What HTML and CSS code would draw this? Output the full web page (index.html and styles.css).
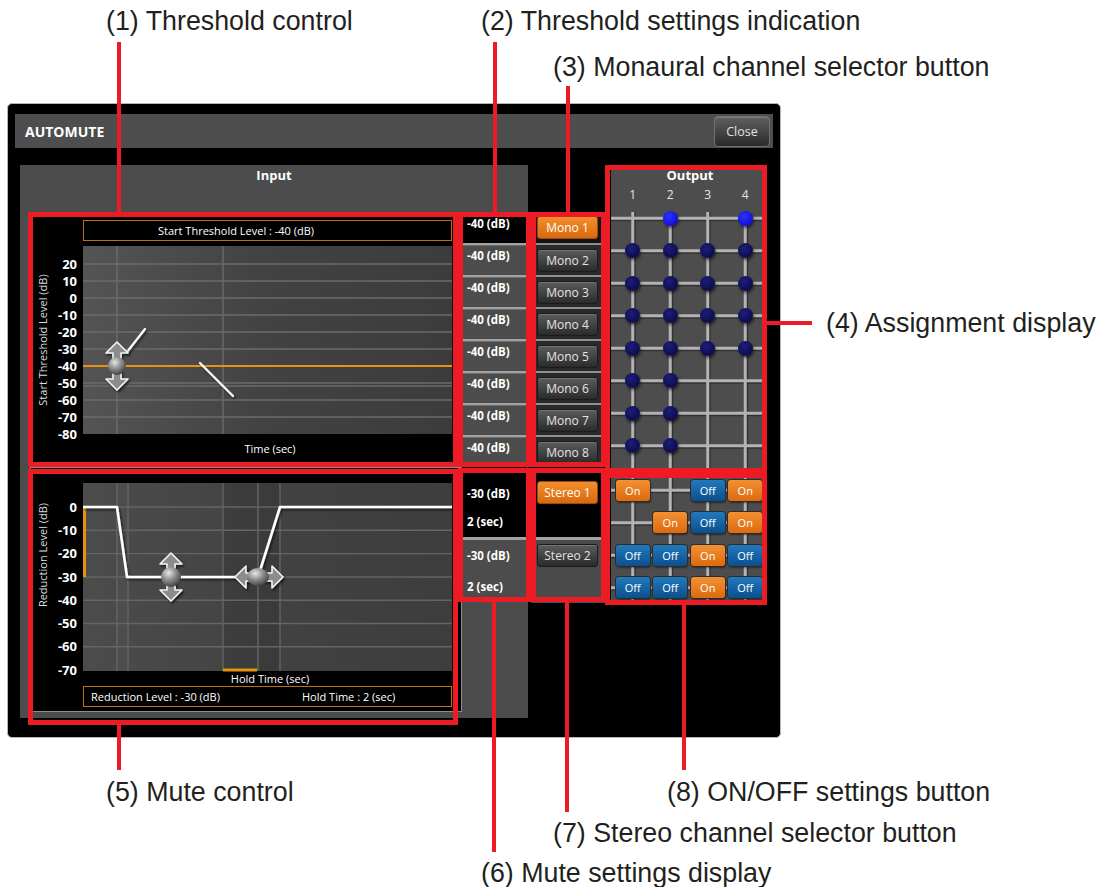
FILE: index.html
```html
<!DOCTYPE html>
<html lang="en">
<head>
<meta charset="utf-8">
<title>AUTOMUTE</title>
<link rel="stylesheet" href="styles.css">
</head>
<body>
<div class="figure">
  <div class="window">
    <div class="titlebar">
      <span class="title">AUTOMUTE</span>
      <div class="close-btn">Close</div>
    </div>
    <div class="content">
      <div class="input-panel">
        <div class="panel-title">Input</div>
        <div class="row-a">
          <div class="thr-block">
            <div class="info-box thr-info">Start Threshold Level : -40 (dB)</div>
            <svg class="chart thr-chart" width="431" height="223" viewBox="0 0 431 223">
              <defs>
                <linearGradient id="tg" x1="0" x2="1" y1="0" y2="0">
                  <stop offset="0" stop-color="#545454"/>
                  <stop offset="0.5" stop-color="#424242"/>
                  <stop offset="1" stop-color="#3c3c3c"/>
                </linearGradient>
                <radialGradient id="kg1" cx="0.38" cy="0.3" r="0.75">
                  <stop offset="0" stop-color="#e8e8e8"/>
                  <stop offset="0.45" stop-color="#929292"/>
                  <stop offset="1" stop-color="#3a3a3a"/>
                </radialGradient>
                <filter id="sh1" x="-30%" y="-30%" width="160%" height="160%">
                  <feDropShadow dx="1.5" dy="2" stdDeviation="1.2" flood-color="#000" flood-opacity="0.6"/>
                </filter>
              </defs>
              <rect x="53" y="2" width="369" height="188" fill="url(#tg)"/>
              <g stroke="#6b6b6b" stroke-width="1.4">
                <line x1="53" y1="20" x2="422" y2="20"/>
                <line x1="53" y1="37" x2="422" y2="37"/>
                <line x1="53" y1="54" x2="422" y2="54"/>
                <line x1="53" y1="71" x2="422" y2="71"/>
                <line x1="53" y1="88" x2="422" y2="88"/>
                <line x1="53" y1="105" x2="422" y2="105"/>
                <line x1="53" y1="139" x2="422" y2="139"/>
                <line x1="53" y1="142" x2="422" y2="142"/>
                <line x1="53" y1="156" x2="422" y2="156"/>
                <line x1="53" y1="173" x2="422" y2="173"/>
                <line x1="87" y1="2" x2="87" y2="190"/>
                <line x1="193" y1="2" x2="193" y2="190"/>
              </g>
              <line x1="53" y1="122" x2="422" y2="122" stroke="#e8920e" stroke-width="2"/>
              <g stroke="#fff" stroke-width="2.2" stroke-linecap="round" filter="url(#sh1)">
                <line x1="97" y1="108" x2="115" y2="85"/>
                <line x1="170" y1="119" x2="203" y2="152"/>
              </g>
              <polygon points="87,98 98,109 91,109 91,135 98,135 87,146 76,135 83,135 83,109 76,109" fill="#8c8c8c" stroke="#f2f2f2" stroke-width="1.6" stroke-linejoin="round" filter="url(#sh1)"/>
              <circle cx="87" cy="122" r="9" fill="url(#kg1)"/>
              <g class="axis" text-anchor="end">
                <text x="47" y="24.5">20</text>
                <text x="47" y="41.5">10</text>
                <text x="47" y="58.5">0</text>
                <text x="47" y="75.5">-10</text>
                <text x="47" y="92.5">-20</text>
                <text x="47" y="109.5">-30</text>
                <text x="47" y="126.5">-40</text>
                <text x="47" y="143.5">-50</text>
                <text x="47" y="160.5">-60</text>
                <text x="47" y="177.5">-70</text>
                <text x="47" y="194.5">-80</text>
              </g>
              <text class="axis-title" transform="translate(17,96) rotate(-90)" text-anchor="middle">Start Threshold Level (dB)</text>
              <text class="axis-x" x="240" y="209" text-anchor="middle">Time (sec)</text>
            </svg>
          </div>
          <div class="thr-settings">
            <div class="set-cell sel">-40 (dB)</div>
            <div class="set-cell">-40 (dB)</div>
            <div class="set-cell">-40 (dB)</div>
            <div class="set-cell">-40 (dB)</div>
            <div class="set-cell">-40 (dB)</div>
            <div class="set-cell">-40 (dB)</div>
            <div class="set-cell">-40 (dB)</div>
            <div class="set-cell">-40 (dB)</div>
          </div>
        </div>
        <div class="row-b">
          <div class="mute-block">
            <svg class="chart mute-chart" width="430" height="217" viewBox="0 0 430 217">
              <defs>
                <linearGradient id="mg" x1="0" x2="1" y1="0" y2="0">
                  <stop offset="0" stop-color="#4c4c4c"/>
                  <stop offset="0.5" stop-color="#424242"/>
                  <stop offset="1" stop-color="#3d3d3d"/>
                </linearGradient>
                <radialGradient id="kg2" cx="0.38" cy="0.3" r="0.75">
                  <stop offset="0" stop-color="#e8e8e8"/>
                  <stop offset="0.45" stop-color="#929292"/>
                  <stop offset="1" stop-color="#3a3a3a"/>
                </radialGradient>
                <filter id="sh2" x="-30%" y="-30%" width="160%" height="160%">
                  <feDropShadow dx="1.5" dy="2" stdDeviation="1.2" flood-color="#000" flood-opacity="0.6"/>
                </filter>
              </defs>
              <rect x="52" y="15" width="369" height="188" fill="url(#mg)"/>
              <rect x="86" y="15" width="11" height="188" fill="#4d4d4d"/>
              <rect x="192" y="15" width="57" height="188" fill="#000" opacity="0.1"/>
              <g stroke="#656565" stroke-width="1.4">
                <line x1="52" y1="39" x2="421" y2="39"/>
                <line x1="52" y1="62.3" x2="421" y2="62.3"/>
                <line x1="52" y1="85.6" x2="421" y2="85.6"/>
                <line x1="52" y1="109" x2="421" y2="109"/>
                <line x1="52" y1="132.2" x2="421" y2="132.2"/>
                <line x1="52" y1="155.5" x2="421" y2="155.5"/>
                <line x1="52" y1="178.8" x2="421" y2="178.8"/>
                <line x1="86" y1="15" x2="86" y2="203"/>
                <line x1="97" y1="15" x2="97" y2="203"/>
                <line x1="192" y1="15" x2="192" y2="203"/>
                <line x1="227" y1="15" x2="227" y2="203"/>
                <line x1="249" y1="15" x2="249" y2="203"/>
              </g>
              <line x1="53.5" y1="39" x2="53.5" y2="109" stroke="#e8920e" stroke-width="3"/>
              <line x1="192" y1="202" x2="226" y2="202" stroke="#e8920e" stroke-width="3"/>
              <path d="M52,39 L86,39 L96,109 L227,109 L249,39 L421,39" fill="none" stroke="#fff" stroke-width="2.6" stroke-linejoin="round" filter="url(#sh2)"/>
              <polygon points="140,85 151,96 144,96 144,122 151,122 140,133 129,122 136,122 136,96 129,96" fill="#8c8c8c" stroke="#f2f2f2" stroke-width="1.6" stroke-linejoin="round" filter="url(#sh2)"/>
              <circle cx="140" cy="109" r="10" fill="url(#kg2)"/>
              <polygon points="204,109 215,98 215,105 241,105 241,98 252,109 241,120 241,113 215,113 215,120" fill="#8c8c8c" stroke="#f2f2f2" stroke-width="1.6" stroke-linejoin="round" filter="url(#sh2)"/>
              <ellipse cx="227" cy="109" rx="11" ry="9" fill="url(#kg2)"/>
              <g class="axis" text-anchor="end">
                <text x="46" y="43.5">0</text>
                <text x="46" y="66.8">-10</text>
                <text x="46" y="90.1">-20</text>
                <text x="46" y="113.5">-30</text>
                <text x="46" y="136.7">-40</text>
                <text x="46" y="160">-50</text>
                <text x="46" y="183.3">-60</text>
                <text x="46" y="206.5">-70</text>
              </g>
              <text class="axis-title" transform="translate(16,87) rotate(-90)" text-anchor="middle">Reduction Level (dB)</text>
              <text class="axis-x" x="239" y="215" text-anchor="middle">Hold Time (sec)</text>
            </svg>
            <div class="info-box mute-info">
              <span class="mute-info-level">Reduction Level : -30 (dB)</span>
              <span>Hold Time : 2 (sec)</span>
            </div>
          </div>
          <div class="mute-settings">
            <div class="mset-cell sel">
              <div>-30 (dB)</div>
              <div class="mset-second">2 (sec)</div>
            </div>
            <div class="mset-cell alt">
              <div>-30 (dB)</div>
              <div class="mset-second">2 (sec)</div>
            </div>
          </div>
        </div>
      </div>

      <div class="channel-col">
        <div class="mono-cell first"><div class="btn orange">Mono 1</div></div>
        <div class="mono-cell"><div class="btn gray">Mono 2</div></div>
        <div class="mono-cell"><div class="btn gray">Mono 3</div></div>
        <div class="mono-cell"><div class="btn gray">Mono 4</div></div>
        <div class="mono-cell"><div class="btn gray">Mono 5</div></div>
        <div class="mono-cell"><div class="btn gray">Mono 6</div></div>
        <div class="mono-cell"><div class="btn gray">Mono 7</div></div>
        <div class="mono-cell"><div class="btn gray">Mono 8</div></div>
        <div class="stereo-cell sel"><div class="btn orange">Stereo 1</div></div>
        <div class="stereo-cell alt"><div class="btn gray">Stereo 2</div></div>
      </div>

      <div class="output-panel">
        <div class="out-title">Output</div>
        <div class="out-nums"><span>1</span><span>2</span><span>3</span><span>4</span></div>
        <div class="out-area">
          <svg class="out-lines" width="153" height="400" viewBox="0 0 153 400">
            <g stroke="#000" stroke-opacity="0.35" stroke-width="2">
              <line x1="23.75" y1="10" x2="23.75" y2="400"/>
              <line x1="61.25" y1="10" x2="61.25" y2="400"/>
              <line x1="98.75" y1="10" x2="98.75" y2="400"/>
              <line x1="136.25" y1="10" x2="136.25" y2="400"/>
              <line x1="0" y1="18.25" x2="153" y2="18.25"/>
              <line x1="0" y1="50.75" x2="153" y2="50.75"/>
              <line x1="0" y1="83.25" x2="153" y2="83.25"/>
              <line x1="0" y1="115.75" x2="153" y2="115.75"/>
              <line x1="0" y1="148.25" x2="153" y2="148.25"/>
              <line x1="0" y1="180.75" x2="153" y2="180.75"/>
              <line x1="0" y1="213.25" x2="153" y2="213.25"/>
              <line x1="0" y1="245.75" x2="153" y2="245.75"/>
              <line x1="0" y1="290.25" x2="153" y2="290.25"/>
              <line x1="0" y1="322.75" x2="153" y2="322.75"/>
              <line x1="0" y1="355.25" x2="153" y2="355.25"/>
              <line x1="0" y1="387.75" x2="153" y2="387.75"/>
            </g>
            <g stroke="#b3b3b3" stroke-width="3">
              <line x1="21.75" y1="10" x2="21.75" y2="400"/>
              <line x1="59.25" y1="10" x2="59.25" y2="400"/>
              <line x1="96.75" y1="10" x2="96.75" y2="400"/>
              <line x1="134.25" y1="10" x2="134.25" y2="400"/>
              <line x1="0" y1="16.25" x2="153" y2="16.25"/>
              <line x1="0" y1="48.75" x2="153" y2="48.75"/>
              <line x1="0" y1="81.25" x2="153" y2="81.25"/>
              <line x1="0" y1="113.75" x2="153" y2="113.75"/>
              <line x1="0" y1="146.25" x2="153" y2="146.25"/>
              <line x1="0" y1="178.75" x2="153" y2="178.75"/>
              <line x1="0" y1="211.25" x2="153" y2="211.25"/>
              <line x1="0" y1="243.75" x2="153" y2="243.75"/>
              <line x1="0" y1="288.25" x2="153" y2="288.25"/>
              <line x1="0" y1="320.75" x2="153" y2="320.75"/>
              <line x1="0" y1="353.25" x2="153" y2="353.25"/>
              <line x1="0" y1="385.75" x2="153" y2="385.75"/>
            </g>
          </svg>
          <div class="dot-grid">
            <span class="cell"></span><span class="cell"><i class="dot on"></i></span><span class="cell"></span><span class="cell"><i class="dot on"></i></span>
            <span class="cell"><i class="dot"></i></span><span class="cell"><i class="dot"></i></span><span class="cell"><i class="dot"></i></span><span class="cell"><i class="dot"></i></span>
            <span class="cell"><i class="dot"></i></span><span class="cell"><i class="dot"></i></span><span class="cell"><i class="dot"></i></span><span class="cell"><i class="dot"></i></span>
            <span class="cell"><i class="dot"></i></span><span class="cell"><i class="dot"></i></span><span class="cell"><i class="dot"></i></span><span class="cell"><i class="dot"></i></span>
            <span class="cell"><i class="dot"></i></span><span class="cell"><i class="dot"></i></span><span class="cell"><i class="dot"></i></span><span class="cell"><i class="dot"></i></span>
            <span class="cell"><i class="dot"></i></span><span class="cell"><i class="dot"></i></span><span class="cell"></span><span class="cell"></span>
            <span class="cell"><i class="dot"></i></span><span class="cell"><i class="dot"></i></span><span class="cell"></span><span class="cell"></span>
            <span class="cell"><i class="dot"></i></span><span class="cell"><i class="dot"></i></span><span class="cell"></span><span class="cell"></span>
          </div>
          <div class="btn-grid">
            <span class="cell"><b class="tog on">On</b></span><span class="cell"></span><span class="cell"><b class="tog off">Off</b></span><span class="cell"><b class="tog on">On</b></span>
            <span class="cell"></span><span class="cell"><b class="tog on">On</b></span><span class="cell"><b class="tog off">Off</b></span><span class="cell"><b class="tog on">On</b></span>
            <span class="cell"><b class="tog off">Off</b></span><span class="cell"><b class="tog off">Off</b></span><span class="cell"><b class="tog on">On</b></span><span class="cell"><b class="tog off">Off</b></span>
            <span class="cell"><b class="tog off">Off</b></span><span class="cell"><b class="tog off">Off</b></span><span class="cell"><b class="tog on">On</b></span><span class="cell"><b class="tog off">Off</b></span>
          </div>
        </div>
      </div>
    </div>
  </div>

  <div class="annot">
    <div class="box b1"></div>
    <div class="box b2"></div>
    <div class="box b3"></div>
    <div class="box b4"></div>
    <div class="box b5"></div>
    <div class="box b6"></div>
    <div class="box b7"></div>
    <div class="box b8"></div>
    <div class="lead l1"></div>
    <div class="lead l2"></div>
    <div class="lead l3"></div>
    <div class="lead l4"></div>
    <div class="lead l5"></div>
    <div class="lead l6"></div>
    <div class="lead l7"></div>
    <div class="lead l8"></div>
    <div class="label t1">(1) Threshold control</div>
    <div class="label t2">(2) Threshold settings indication</div>
    <div class="label t3">(3) Monaural channel selector button</div>
    <div class="label t4">(4) Assignment display</div>
    <div class="label t5">(5) Mute control</div>
    <div class="label t8">(8) ON/OFF settings button</div>
    <div class="label t7">(7) Stereo channel selector button</div>
    <div class="label t6">(6) Mute settings display</div>
  </div>
</div>
</body>
</html>
```

FILE: styles.css
```css
html, body {
  margin: 0;
  padding: 0;
  background: #fff;
}

.figure {
  position: relative;
  width: 1097px;
  height: 887px;
  box-sizing: border-box;
  padding: 103px 0 0 7px;
  font-family: "Open Sans", "Noto Sans", sans-serif;
  overflow: hidden;
}

/* ---------- application window ---------- */
.window {
  width: 774px;
  height: 635px;
  box-sizing: border-box;
  background: #000;
  border: 1px solid #b5b5b5;
  border-radius: 5px;
  padding: 10px 7px 0;
}

.titlebar {
  height: 34px;
  background: #4e4e4e;
  display: flex;
  align-items: center;
  justify-content: space-between;
  padding: 0 3px 0 10px;
}

.title {
  color: #fff;
  font-weight: 700;
  font-size: 14px;
}

.close-btn {
  width: 56px;
  height: 31px;
  box-sizing: border-box;
  border: 1px solid #707070;
  border-radius: 4px;
  background: linear-gradient(#606060, #2a2a2a);
  box-shadow: inset 0 1px 0 rgba(255, 255, 255, 0.18);
  color: #e2e2e2;
  font-size: 12.5px;
  display: flex;
  align-items: center;
  justify-content: center;
}

.content {
  display: flex;
  align-items: flex-start;
}

/* ---------- input panel ---------- */
.input-panel {
  margin: 17px 0 0 5px;
  width: 508px;
  height: 553px;
  box-sizing: border-box;
  background: #4c4c4c;
  padding-left: 10px;
}

.panel-title {
  margin-left: -10px;
  height: 47px;
  line-height: 20px;
  text-align: center;
  color: #fff;
  font-weight: 700;
  font-size: 13px;
}

.row-a {
  display: flex;
  height: 255px;
}

.thr-block {
  width: 431px;
  background: #000;
}

.info-box {
  margin-left: 53px;
  width: 369px;
  height: 21px;
  box-sizing: border-box;
  border: 1px solid #b8730e;
  background: #000;
  color: #fff;
  font-size: 11px;
  line-height: 19px;
  white-space: nowrap;
}

.thr-info {
  margin-top: 8px;
  padding-left: 74px;
}

.chart {
  display: block;
}

.chart text {
  font-family: "Open Sans", "Noto Sans", sans-serif;
}

.chart .axis text {
  fill: #fff;
  font-weight: 700;
  font-size: 13px;
}

.chart .axis-title {
  fill: #dcdcdc;
  font-size: 11px;
}

.chart .axis-x {
  fill: #fff;
  font-size: 11px;
}

.thr-chart {
  margin-top: 3px;
}

.thr-settings {
  width: 66px;
  display: flex;
  flex-direction: column;
}

.set-cell {
  height: 32px;
  box-sizing: border-box;
  border-top: 2px solid #a2a2a2;
  box-shadow: inset 0 1px 0 #6c6c6c;
  background: #4c4c4c;
  color: #fff;
  font-weight: 700;
  font-size: 11.5px;
  line-height: 16px;
  padding: 3px 0 0 6px;
}

.set-cell.sel {
  height: 31px;
  border-top: none;
  box-shadow: none;
  background: #000;
  padding-top: 4px;
}

.row-b {
  display: flex;
  align-items: flex-start;
}

.mute-block {
  width: 432px;
  height: 245px;
  box-sizing: border-box;
  border: 1px solid #8c8c8c;
  background: #000;
}

.mute-info {
  margin: 1px 0 0 52px;
  display: flex;
  padding-left: 7px;
}

.mute-info-level {
  width: 211px;
}

.mute-settings {
  width: 65px;
}

.mset-cell {
  box-sizing: border-box;
  color: #fff;
  font-weight: 700;
  font-size: 11.5px;
  line-height: 16px;
  padding-left: 5px;
}

.mset-cell.sel {
  height: 70px;
  background: #000;
  padding-top: 19px;
}

.mset-cell.sel .mset-second {
  margin-top: 12px;
}

.mset-cell.alt {
  height: 66px;
  background: #4c4c4c;
  border-top: 3px solid #a2a2a2;
  padding-top: 8px;
}

.mset-cell.alt .mset-second {
  margin-top: 15px;
}

/* ---------- channel selector column ---------- */
.channel-col {
  margin: 64px 0 0 3px;
  width: 75px;
}

.mono-cell {
  height: 32px;
  box-sizing: border-box;
  border-top: 2px solid #8e8e8e;
  background: #2a2a2a;
  display: flex;
  align-items: center;
  padding-left: 6px;
}

.mono-cell.first {
  height: 31px;
  border-top: none;
  background: #141414;
}

.btn {
  width: 61px;
  height: 23px;
  box-sizing: border-box;
  border-radius: 3px;
  font-size: 12px;
  display: flex;
  align-items: center;
  justify-content: center;
  white-space: nowrap;
}

.btn.gray {
  color: #e4e4e4;
  background: linear-gradient(#5c5c5c, #2b2b2b);
  border: 1px solid #1b1b1b;
  box-shadow: inset 0 1px 0 rgba(255, 255, 255, 0.16);
}

.btn.orange {
  color: #fff;
  background: linear-gradient(#f28e2e, #d9690c);
  border: 1px solid #9c4c08;
}

.stereo-cell {
  box-sizing: border-box;
  padding-left: 6px;
}

.stereo-cell.sel {
  height: 70px;
  background: #000;
  padding-top: 14px;
}

.stereo-cell.alt {
  height: 66px;
  background: #4a4a4a;
  border-top: 3px solid #a2a2a2;
  padding-top: 4px;
}

/* ---------- output panel ---------- */
.output-panel {
  margin: 19px 0 0 5px;
  width: 153px;
  height: 435px;
  background: #4d4d4d;
  overflow: hidden;
}

.out-title {
  height: 19px;
  line-height: 17px;
  padding-left: 5px;
  text-align: center;
  color: #fff;
  font-weight: 700;
  font-size: 13px;
}

.out-nums {
  display: grid;
  grid-template-columns: repeat(4, 37.5px);
  padding: 2px 0 0 3px;
  height: 14px;
  line-height: 14px;
  color: #e6e6e6;
  font-size: 12px;
  text-align: center;
}

.out-area {
  position: relative;
}

.out-lines {
  position: absolute;
  left: 0;
  top: 0;
}

.dot-grid,
.btn-grid {
  position: relative;
  display: grid;
  grid-template-columns: repeat(4, 37.5px);
  grid-auto-rows: 32.5px;
  padding-left: 3px;
}

.btn-grid {
  margin-top: 12px;
}

.cell {
  display: flex;
  align-items: center;
  justify-content: center;
}

.dot {
  width: 15px;
  height: 15px;
  border-radius: 50%;
  background: radial-gradient(circle at 40% 35%, #1d1d7a, #06063a);
  box-shadow: 1px 2px 3px rgba(0, 0, 0, 0.6);
}

.dot.on {
  background: radial-gradient(circle at 40% 35%, #3030ff, #0000cf);
}

.tog {
  width: 34px;
  height: 21px;
  box-sizing: border-box;
  border-radius: 3px;
  font-size: 11px;
  font-weight: 400;
  color: #fff;
  display: flex;
  align-items: center;
  justify-content: center;
  box-shadow: 0 0 0 1px #2c2c2c, 1px 2px 2px rgba(0, 0, 0, 0.45);
}

.tog.on {
  background: linear-gradient(#f39032, #db6b0e);
}

.tog.off {
  background: linear-gradient(#2279bd, #0c4f8c);
}

/* ---------- annotation layer ---------- */
.annot {
  position: absolute;
  left: 0;
  top: 0;
  width: 1097px;
  height: 887px;
  pointer-events: none;
}

.box {
  position: absolute;
  box-sizing: border-box;
  border: 5px solid #ed1c24;
}

.b1 { left: 28px; top: 212px; width: 430px; height: 255px; }
.b2 { left: 458px; top: 212px; width: 73px; height: 255px; }
.b3 { left: 531px; top: 212px; width: 75px; height: 255px; }
.b4 { left: 605px; top: 165px; width: 162px; height: 308px; }
.b5 { left: 28px; top: 469px; width: 430px; height: 256px; }
.b6 { left: 458px; top: 468px; width: 73px; height: 134px; }
.b7 { left: 531px; top: 468px; width: 75px; height: 134px; }
.b8 { left: 605px; top: 473px; width: 162px; height: 132px; }

.lead {
  position: absolute;
  background: #ed1c24;
}

.l1 { left: 117px; top: 42px; width: 4px; height: 171px; }
.l2 { left: 493px; top: 42px; width: 4px; height: 171px; }
.l3 { left: 566px; top: 86px; width: 4px; height: 127px; }
.l4 { left: 766px; top: 321px; width: 46px; height: 4px; }
.l5 { left: 117px; top: 724px; width: 4px; height: 46px; }
.l6 { left: 492px; top: 601px; width: 4px; height: 251px; }
.l7 { left: 565px; top: 601px; width: 4px; height: 211px; }
.l8 { left: 682px; top: 604px; width: 4px; height: 166px; }

.label {
  position: absolute;
  font-family: "Liberation Sans", Arial, sans-serif;
  font-size: 26.8px;
  line-height: 30px;
  color: #231f20;
  white-space: nowrap;
}

.t1 { left: 106px; top: 6px; }
.t2 { left: 481px; top: 6px; }
.t3 { left: 553px; top: 52px; }
.t4 { left: 826px; top: 308px; }
.t5 { left: 106px; top: 777px; }
.t8 { left: 667px; top: 777px; }
.t7 { left: 553px; top: 818px; }
.t6 { left: 481px; top: 858px; }
```
